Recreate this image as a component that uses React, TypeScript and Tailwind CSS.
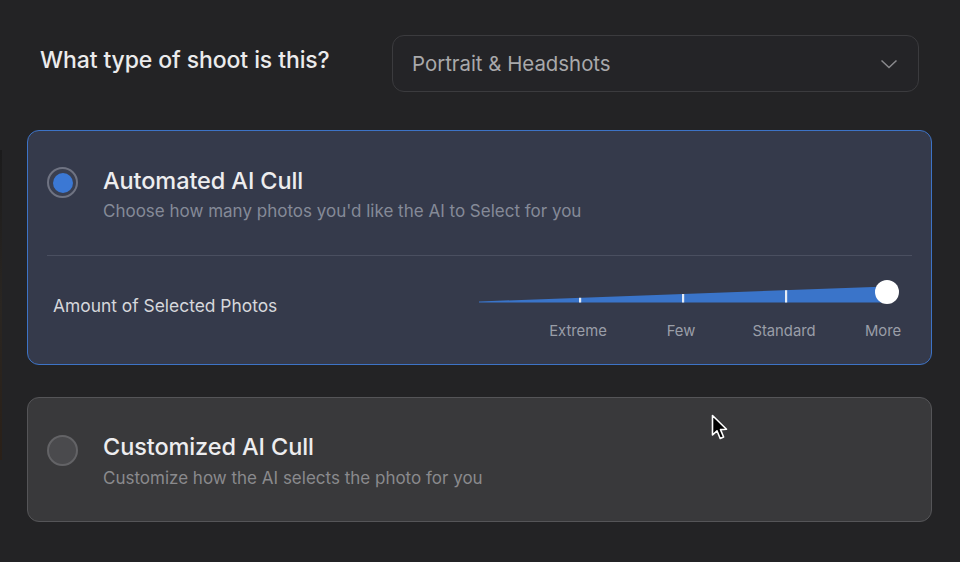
import React from "react";

function Cursor() {
  return (
    <svg width="20" height="28" viewBox="0 0 20 28" className="absolute left-[711px] top-[414px]">
      <path d="M1.5 1.5 L1.5 21 L6 16.8 L9.2 24.5 L12.6 23 L9.5 15.6 L15.5 15.2 Z" fill="#000" stroke="#fff" strokeWidth="1.6" strokeLinejoin="round" />
    </svg>
  );
}

function Slider() {
  const ticks = [101, 204, 307];
  const labels = [
    { t: "Extreme", x: 99 },
    { t: "Few", x: 202 },
    { t: "Standard", x: 305 },
    { t: "More", x: 404 },
  ];
  return (
    <div className="relative w-[421px] h-[61px] mr-[12px]">
      <svg width="421" height="24" viewBox="0 0 421 24" className="block">
        <polygon points="0,21.5 0,22.5 408,22.5 408,6.5" fill="#3a74c9" />
        {ticks.map((x) => {
          const top = 21.5 - (x / 408) * 15;
          return <rect key={x} x={x - 1} y={top} width="2.2" height={22.5 - top} fill="#e6ecf5" />;
        })}
      </svg>
      <div className="absolute left-[396px] top-0 w-[24px] h-[24px] rounded-full bg-white" />
      {labels.map((l) => (
        <span
          key={l.t}
          className="absolute top-[41px] -translate-x-1/2 text-[14.8px] leading-[20px] text-[#9a9ea8] whitespace-nowrap"
          style={{ left: l.x }}
        >
          {l.t}
        </span>
      ))}
    </div>
  );
}

export default function App() {
  return (
    <div
      className="relative w-[960px] h-[562px] overflow-hidden bg-[#232325] pl-[27px] pr-[28px] pt-[35px]"
      style={{ fontFamily: "Inter, 'Liberation Sans', Arial, sans-serif" }}
    >
      <div className="absolute left-0 top-[150px] w-[2px] h-[310px] bg-gradient-to-b from-[#1b1b1c] via-[#2a2622] to-[#2a2018]" />
      <div className="flex items-start justify-between">
        <h1 className="ml-[13px] mt-[10px] text-[23px] leading-[30px] text-[#ebebec] font-medium tracking-[-0.1px]">
          What type of shoot is this?
        </h1>
        <div className="mr-[13px] w-[527px] h-[57px] rounded-[12px] border border-[#3b3b3e] bg-[#242427] flex items-center justify-between pl-[19px] pr-[20px]">
          <span className="mt-[2px] text-[20.4px] text-[#a9a9ab]">Portrait &amp; Headshots</span>
          <svg width="18" height="10" viewBox="0 0 18 10">
            <path d="M1.5 1.5 L9 8.5 L16.5 1.5" fill="none" stroke="#8a8a8d" strokeWidth="1.5" />
          </svg>
        </div>
      </div>

      <div className="mt-[38px] rounded-[12px] border-[1.5px] border-[#3d73c6] bg-[#353a4b] px-[19px] pt-[36px] pb-[23px]">
        <div className="flex items-start gap-[25px]">
          <div className="w-[31px] h-[31px] rounded-full border-2 border-[#6f7382] bg-[#3a3f50] flex items-center justify-center shrink-0">
            <div className="w-[20px] h-[20px] rounded-full bg-[#3b78d4]" />
          </div>
          <div>
            <div className="text-[23.5px] leading-[28px] text-[#ededef] font-medium tracking-[-0.1px]">Automated AI Cull</div>
            <div className="mt-[4px] text-[17px] leading-[24px] text-[#858a98]">
              Choose how many photos you'd like the AI to Select for you
            </div>
          </div>
        </div>
        <div className="mt-[32px] h-px bg-[#4a4f60]" />
        <div className="flex items-start justify-between pt-[24px]">
          <div className="ml-[6px] mt-[15px] text-[17.4px] leading-[22px] text-[#d6d7db]">
            Amount of Selected Photos
          </div>
          <Slider />
        </div>
      </div>

      <div className="mt-[32px] rounded-[12px] border-[1.5px] border-[#555558] bg-[#39393b] px-[19px] pt-[35px] pb-[31px]">
        <div className="flex items-start gap-[25px]">
          <div className="mt-[2px] w-[31px] h-[31px] rounded-full border-2 border-[#636366] bg-[#4a4a4d] shrink-0" />
          <div>
            <div className="text-[23.5px] leading-[28px] text-[#ededef] font-medium tracking-[-0.1px]">Customized AI Cull</div>
            <div className="mt-[5px] text-[17px] leading-[24px] text-[#8a8a8d]">
              Customize how the AI selects the photo for you
            </div>
          </div>
        </div>
      </div>

      <Cursor />
    </div>
  );
}
